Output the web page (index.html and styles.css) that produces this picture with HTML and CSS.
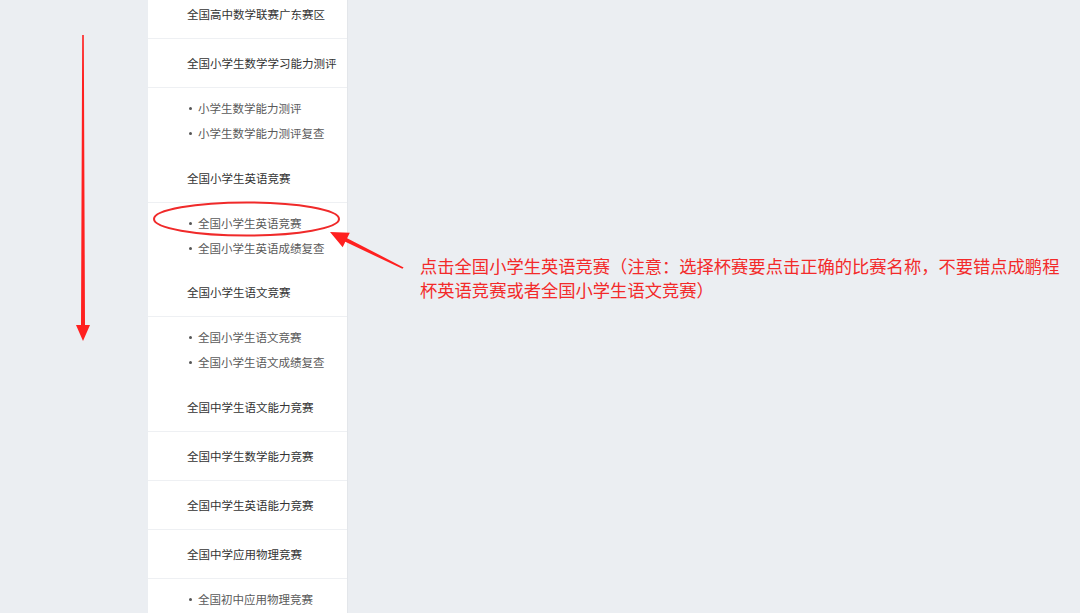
FILE: index.html
```html
<!DOCTYPE html>
<html lang="zh-CN">
<head>
  <meta charset="UTF-8" />
  <meta name="viewport" content="width=device-width, initial-scale=1.0" />
  <title>竞赛列表</title>
  <link rel="stylesheet" href="styles.css">
</head>
<body>
  <div id="page">
    <ul class="menu">
      <li class="group"><div class="head">全国高中数学联赛广东赛区</div></li>
      <li class="group">
        <div class="head">全国小学生数学学习能力测评</div>
        <ul class="subs">
          <li>小学生数学能力测评</li>
          <li>小学生数学能力测评复查</li>
        </ul>
      </li>
      <li class="group">
        <div class="head">全国小学生英语竞赛</div>
        <ul class="subs">
          <li>全国小学生英语竞赛</li>
          <li>全国小学生英语成绩复查</li>
        </ul>
      </li>
      <li class="group">
        <div class="head">全国小学生语文竞赛</div>
        <ul class="subs">
          <li>全国小学生语文竞赛</li>
          <li>全国小学生语文成绩复查</li>
        </ul>
      </li>
      <li class="group"><div class="head">全国中学生语文能力竞赛</div></li>
      <li class="group"><div class="head">全国中学生数学能力竞赛</div></li>
      <li class="group"><div class="head">全国中学生英语能力竞赛</div></li>
      <li class="group">
        <div class="head">全国中学应用物理竞赛</div>
        <ul class="subs">
          <li>全国初中应用物理竞赛</li>
        </ul>
      </li>
    </ul>
  </div>

  <!-- red marks drawn over the screenshot -->
  <svg class="marks" width="1080" height="613" viewBox="0 0 1080 613">
    <polygon points="82.2,35 83.8,35 85,325 90,325 83,341 76,325 81,325" fill="#ff2020"/>
    <ellipse cx="246.5" cy="219" rx="92.5" ry="16.5" fill="none" stroke="#f02a2a" stroke-width="2"/>
    <polygon points="330,232 349.8,232.8 347.1,238.2 403.6,267.4 402.4,268.8 345.3,241.8 342.7,247.2" fill="#ff2020"/>
  </svg>
  <p class="note">点击全国小学生英语竞赛（注意：选择杯赛要点击正确的比赛名称，不要错点成鹏程<br>杯英语竞赛或者全国小学生语文竞赛）</p>
</body>
</html>
```

FILE: styles.css
```css
body {
  margin: 0;
  background: #ebeef2;
  font-family: "Noto Sans CJK SC", "Noto Sans", sans-serif;
  overflow: hidden;
  height: 613px;
}
#page {
  display: flex;
  padding-left: 148px;
  margin-top: -10px;
}
.menu {
  list-style: none;
  margin: 0;
  padding: 0;
  width: 199px;
  background: #fff;
  border-right: 1px solid #e3e6ea;
}
.head {
  height: 48px;
  line-height: 48px;
  padding-left: 39px;
  font-size: 11.5px;
  color: #333;
  border-bottom: 1px solid #eef0f3;
  white-space: nowrap;
}
.subs {
  list-style: none;
  margin: 0;
  padding: 8px 0 7.5px 41px;
}
.subs li {
  height: 25px;
  line-height: 25px;
  font-size: 11.5px;
  color: #5a5a5a;
  display: flex;
  align-items: center;
  gap: 6px;
  white-space: nowrap;
}
.subs li::before {
  content: "";
  width: 3px;
  height: 3px;
  border-radius: 50%;
  background: #555;
}
.marks {
  position: absolute;
  left: 0;
  top: 0;
  pointer-events: none;
}
.note {
  position: absolute;
  left: 420px;
  top: 254px;
  margin: 0;
  font-size: 17.3px;
  line-height: 24px;
  color: #f32a2a;
  white-space: nowrap;
}
```
